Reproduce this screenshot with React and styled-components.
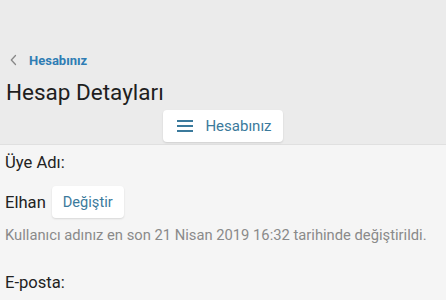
import React from 'react';
import styled, { createGlobalStyle } from 'styled-components';

const GlobalStyle = createGlobalStyle`
  html, body {
    margin: 0;
    padding: 0;
    background: #f5f5f5;
    font-family: Roboto, "Liberation Sans", Arial, sans-serif;
  }
`;

const Header = styled.div`
  background: #ebebeb;
  border-bottom: 1px solid #e0e0e0;
  padding: 50px 0 2px;
`;

const BackRow = styled.div`
  display: flex;
  align-items: center;
  height: 20px;
  padding-left: 10px;
  gap: 12px;
`;

const BackLink = styled.a`
  color: #2f7db4;
  font-size: 13px;
  font-weight: 700;
  text-decoration: none;
`;

const Title = styled.h1`
  margin: 8px 0 4px;
  padding-left: 6px;
  font-size: 22.5px;
  font-weight: 400;
  line-height: 28px;
  color: #1e1e1e;
`;

const MenuRow = styled.div`
  display: flex;
  justify-content: center;
`;

const Button = styled.button`
  display: flex;
  align-items: center;
  gap: ${p => (p.$icon ? '12px' : '0')};
  height: 32px;
  padding: 0 11px 0 ${p => (p.$icon ? '14px' : '11px')};
  background: #fff;
  border: none;
  border-radius: 4px;
  box-shadow: 0 1px 2px rgba(0, 0, 0, 0.12);
  color: #3b7a9c;
  font-family: inherit;
  font-size: ${p => (p.$icon ? '15px' : '14.6px')};
`;

const Body = styled.div`
  padding: 7px 5px 0;
`;

const Label = styled.div`
  font-size: 16.6px;
  line-height: 22px;
  color: #222;
`;

const NameRow = styled.div`
  display: flex;
  align-items: center;
  gap: 6px;
  margin-top: 12px;
`;

const Name = styled.span`
  font-size: 16.6px;
  color: #222;
`;

const Note = styled.div`
  font-size: 14.75px;
  line-height: 18px;
  color: #8a8a8a;
  margin-top: 8px;
  margin-bottom: 28px;
  white-space: nowrap;
`;

const Chevron = () => (
  <svg width="7" height="12" viewBox="0 0 7 12" fill="none">
    <path d="M5.5 1.5L1.3 6L5.5 10.5" stroke="#888" strokeWidth="1.3" strokeLinecap="round" strokeLinejoin="round" />
  </svg>
);

const Hamburger = () => (
  <svg width="16" height="14" viewBox="0 0 16 14">
    <rect x="0" y="1" width="16" height="2" fill="#3b7a9c" />
    <rect x="0" y="6" width="16" height="2" fill="#3b7a9c" />
    <rect x="0" y="11" width="16" height="2" fill="#3b7a9c" />
  </svg>
);

export default function App() {
  return (
    <>
      <GlobalStyle />
      <Header>
        <BackRow>
          <Chevron />
          <BackLink href="#">Hesabınız</BackLink>
        </BackRow>
        <Title>Hesap Detayları</Title>
        <MenuRow>
          <Button $icon>
            <Hamburger />
            Hesabınız
          </Button>
        </MenuRow>
      </Header>
      <Body>
        <Label>Üye Adı:</Label>
        <NameRow>
          <Name>Elhan</Name>
          <Button>Değiştir</Button>
        </NameRow>
        <Note>Kullanıcı adınız en son 21 Nisan 2019 16:32 tarihinde değiştirildi.</Note>
        <Label>E-posta:</Label>
      </Body>
    </>
  );
}
